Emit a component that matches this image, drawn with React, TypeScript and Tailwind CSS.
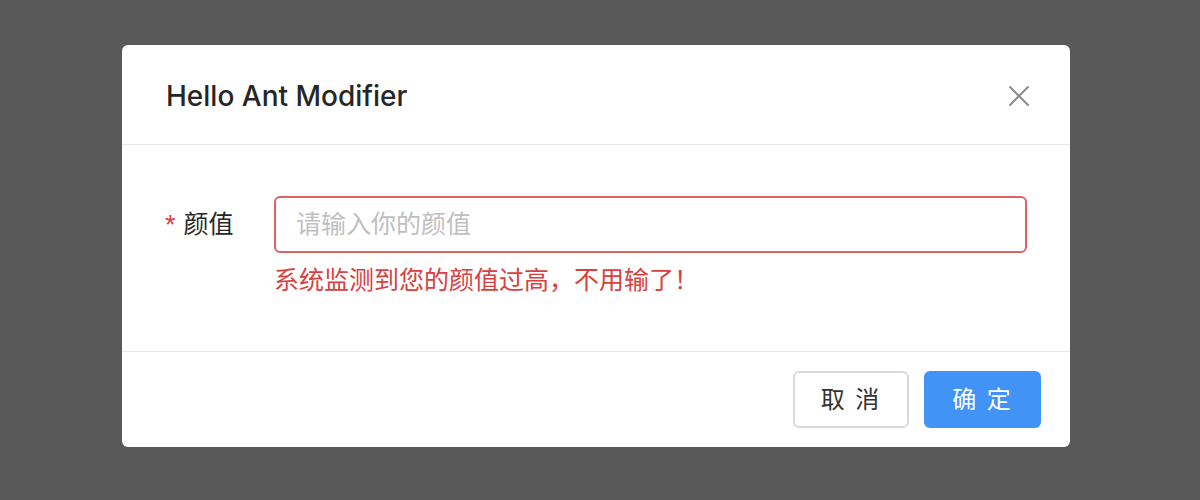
import React from 'react'

const font = { fontFamily: '"Liberation Sans", "Noto Sans CJK SC", sans-serif' }

const CloseIcon = () => (
  <svg width="22" height="22" viewBox="0 0 22 22" fill="none" stroke="#8c8c8c" strokeWidth="2" strokeLinecap="round">
    <path d="M2 2 L20 20 M20 2 L2 20" />
  </svg>
)

const App = () => {
  return (
    <div className="h-[500px] w-[1200px] bg-[#595959] pl-[122px] pt-[45px]" style={font}>
      <div className="flex h-[402px] w-[948px] flex-col rounded-[6px] bg-white">
        <div className="flex h-[100px] items-center justify-between border-b border-[#e8e8e8] pl-[44px] pr-[40px] pt-[3px]">
          <span className="font-['Inter'] text-[28px] font-medium text-[#262626]">Hello Ant Modifier</span>
          <CloseIcon />
        </div>
        <div className="flex-1 pl-[43px] pr-[43px] pt-[51px]">
          <div className="flex items-start">
            <label className="flex h-[57px] w-[109px] items-center text-[25px] text-[#262626]">
              <span className="mr-[8px] mt-[2px] text-[27px] leading-none text-[#e0403c]">*</span>
              颜值
            </label>
            <div className="flex flex-1 flex-col">
              <input
                className="h-[57px] w-full rounded-[6px] border-2 border-[#dd6360] px-[20px] text-[25px] outline-none placeholder:text-[#bfbfbf]"
                placeholder="请输入你的颜值"
                style={font}
              />
              <div className="mt-[10px] text-[25px] leading-[34px] text-[#d9403f]">
                系统监测到您的颜值过高，不用输了！
              </div>
            </div>
          </div>
        </div>
        <div className="flex h-[96px] items-center justify-end gap-[15px] border-t border-[#e8e8e8] pr-[29px]">
          <button className="h-[57px] w-[116px] rounded-[6px] border-2 border-[#d9d9d9] bg-white text-[24px] tracking-[2px] text-[#333]">
            取 消
          </button>
          <button className="h-[57px] w-[117px] rounded-[6px] bg-[#4194f5] text-[24px] tracking-[2px] text-white">
            确 定
          </button>
        </div>
      </div>
    </div>
  )
}

export default App
